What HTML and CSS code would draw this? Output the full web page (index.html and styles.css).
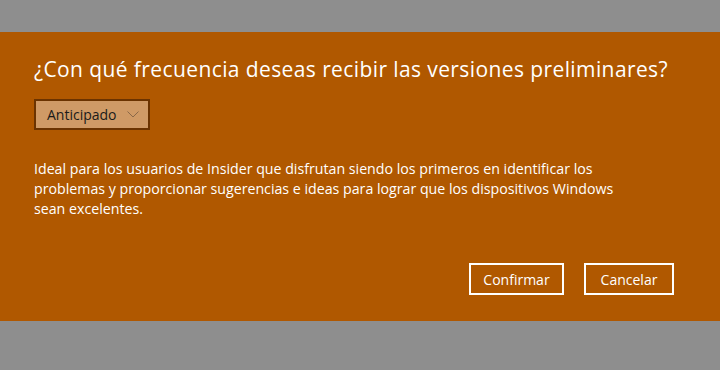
FILE: index.html
```html
<!DOCTYPE html>
<html lang="es">
<head>
<meta charset="utf-8">
<link rel="stylesheet" href="styles.css">
</head>
<body>
<div class="page">
  <section class="panel">
    <h1 class="title">¿Con qué frecuencia deseas recibir las versiones preliminares?</h1>
    <div class="select">
      <span class="select-label">Anticipado</span>
      <svg class="chevron" width="12" height="7" viewBox="0 0 12 7"><path d="M0.5 0.5 L6 6 L11.5 0.5" fill="none" stroke="#8a6848" stroke-width="1"/></svg>
    </div>
    <p class="desc">Ideal para los usuarios de Insider que disfrutan siendo los primeros en identificar los<br>problemas y proporcionar sugerencias e ideas para lograr que los dispositivos Windows<br>sean excelentes.</p>
    <div class="actions">
      <button class="btn btn-confirm">Confirmar</button>
      <button class="btn btn-cancel">Cancelar</button>
    </div>
  </section>
</div>
</body>
</html>
```
FILE: styles.css
```css
html, body {
  margin: 0;
  padding: 0;
}
body {
  background: #8e8e8e;
  font-family: "Open Sans", "Noto Sans", sans-serif;
  color: #fff;
}
.page {
  width: 720px;
  height: 370px;
  padding-top: 32px;
  box-sizing: border-box;
}
.panel {
  background: #b05800;
  height: 289px;
  box-sizing: border-box;
  padding: 23px 46px 0 34px;
  display: flex;
  flex-direction: column;
  align-items: flex-start;
}
.title {
  margin: 0;
  font-size: 21px;
  line-height: 28px;
  font-weight: 400;
  letter-spacing: 0.4px;
  white-space: nowrap;
  color: #fff;
}
.select {
  margin-top: 16px;
  width: 116px;
  height: 31px;
  box-sizing: border-box;
  border: 2px solid #6b3300;
  background: #cf9a66;
  display: flex;
  align-items: center;
  padding-left: 11px;
  gap: 10px;
}
.select-label {
  font-size: 14px;
  color: #1a1a1a;
}
.chevron {
  display: block;
}
.desc {
  margin: 29px 0 0 0;
  font-size: 14.2px;
  line-height: 20px;
  white-space: nowrap;
}
.actions {
  margin-top: 44px;
  align-self: flex-end;
  display: flex;
  gap: 20px;
}
.btn {
  height: 32px;
  box-sizing: border-box;
  border: 2px solid #fff;
  background: transparent;
  color: #fff;
  font-family: "Open Sans", "Noto Sans", sans-serif;
  font-size: 14px;
  padding: 0;
  cursor: pointer;
}
.btn-confirm {
  width: 95px;
}
.btn-cancel {
  width: 90px;
}
```
